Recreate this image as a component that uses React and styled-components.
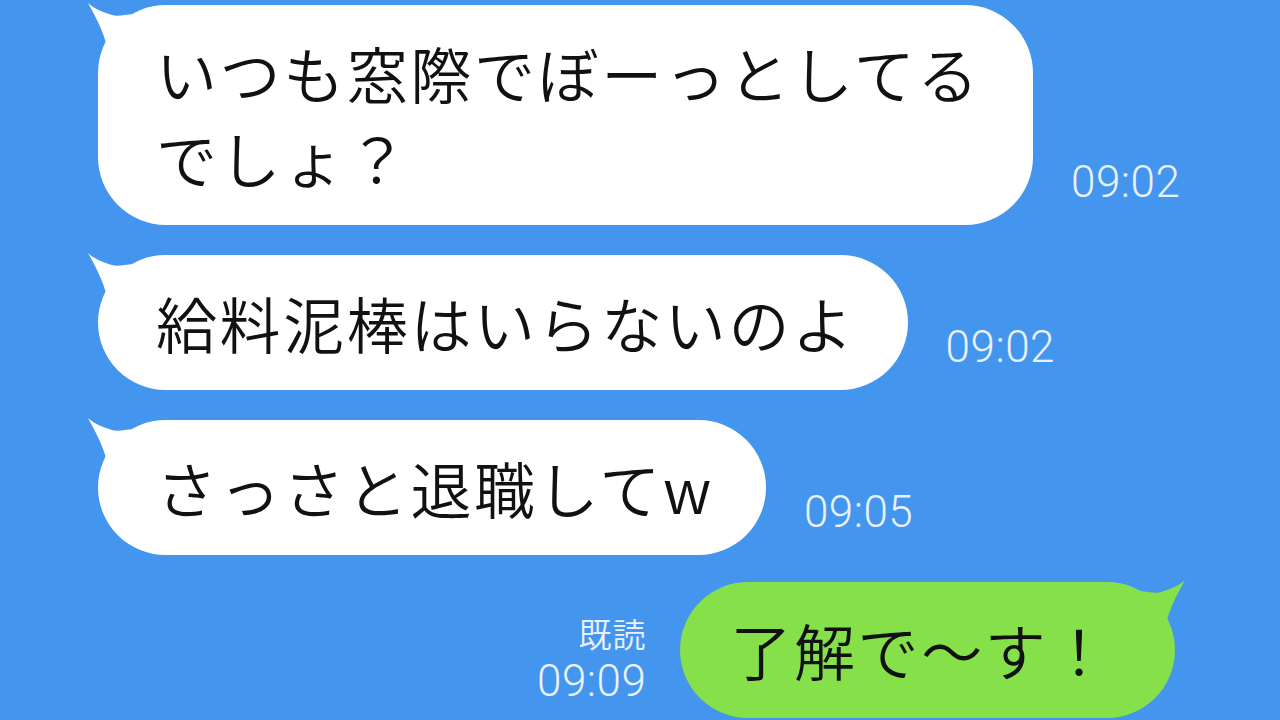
import React from "react";
import styled, { createGlobalStyle } from "styled-components";

const Global = createGlobalStyle`
  html, body { margin: 0; padding: 0; background: #4495ee; }
  body { width: 1280px; height: 720px; overflow: hidden; }
`;

const Screen = styled.div`
  width: 1280px;
  height: 720px;
  background: #4495ee;
  box-sizing: border-box;
  padding: 5px 105px 0 98px;
  display: flex;
  flex-direction: column;
  gap: 30px;
  font-family: "Noto Sans CJK JP", "Noto Sans", sans-serif;
`;

const Row = styled.div`
  display: flex;
  align-items: flex-end;
  justify-content: ${(p) => (p.$mine ? "flex-end" : "flex-start")};
  gap: ${(p) => (p.$mine ? "34px" : "38px")};
  margin-top: ${(p) => (p.$mine ? "-3px" : "0")};
`;

const Bubble = styled.div`
  position: relative;
  background: ${(p) => (p.$mine ? "#86e04a" : "#ffffff")};
  border-radius: 68px;
  padding: ${(p) => (p.$mine ? "25px 63px 26px 50px" : "25px 52px 25px 58px")};
  font-size: 61px;
  font-weight: 350;
  line-height: 85px;
  color: #111;
  letter-spacing: 2.6px;
  white-space: pre;
`;

const Tail = styled.svg`
  position: absolute;
  top: -8px;
  ${(p) => (p.$mine ? "right: -14px; transform: scaleX(-1);" : "left: -14px;")}
  width: 70px;
  height: 60px;
  overflow: visible;
`;

const Meta = styled.div`
  display: flex;
  flex-direction: column;
  align-items: ${(p) => (p.$mine ? "flex-end" : "flex-start")};
  margin-bottom: ${(p) => (p.$mine ? "14px" : "20px")};
  color: #e9f1fd;
  font-family: Roboto, "Liberation Sans", sans-serif;
  font-weight: 300;
`;

const Read = styled.div`
  font-family: "Noto Sans CJK JP", sans-serif;
  font-size: 33px;
  line-height: 38px;
  margin-bottom: 6px;
  font-weight: 350;
  letter-spacing: 1px;
`;

const Time = styled.div`
  font-size: 44px;
  line-height: 46px;
  letter-spacing: 0.5px;
`;

function TailShape({ mine }) {
  return (
    <Tail $mine={mine} viewBox="0 0 70 60">
      <path
        d="M4 6 C 14 24, 22 40, 24 56 L 68 30 C 55 8, 40 22, 28 18 C 18 15, 9 11, 4 6 Z"
        fill={mine ? "#86e04a" : "#ffffff"}
      />
    </Tail>
  );
}

const messages = [
  { text: "いつも窓際でぼーっとしてる\nでしょ？", time: "09:02" },
  { text: "給料泥棒はいらないのよ", time: "09:02" },
  { text: "さっさと退職してw", time: "09:05" },
];

export default function App() {
  return (
    <>
      <Global />
      <Screen>
        {messages.map((m, i) => (
          <Row key={i}>
            <Bubble>
              <TailShape />
              {m.text}
            </Bubble>
            <Meta>
              <Time>{m.time}</Time>
            </Meta>
          </Row>
        ))}
        <Row $mine>
          <Meta $mine>
            <Read>既読</Read>
            <Time>09:09</Time>
          </Meta>
          <Bubble $mine>
            <TailShape mine />
            了解で〜す！
          </Bubble>
        </Row>
      </Screen>
    </>
  );
}
